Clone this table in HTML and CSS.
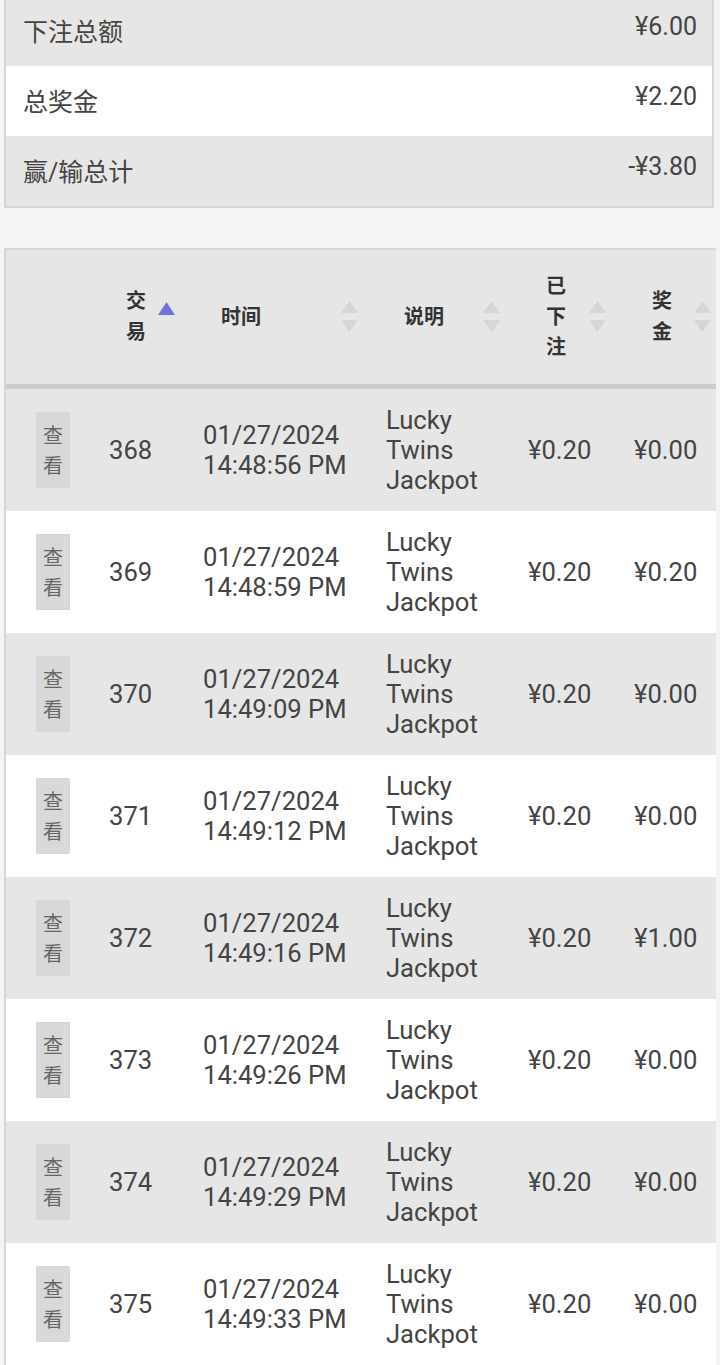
FILE: index.html
```html
<!DOCTYPE html>
<html lang="zh-CN">
<head>
<meta charset="utf-8">
<title>交易记录</title>
<link rel="stylesheet" href="styles.css">
</head>
<body>
<div class="summary">
  <div class="sum-row gray"><span class="sum-label">下注总额</span><span class="sum-value">¥6.00</span></div>
  <div class="sum-row white"><span class="sum-label">总奖金</span><span class="sum-value">¥2.20</span></div>
  <div class="sum-row gray"><span class="sum-label">赢/输总计</span><span class="sum-value">-¥3.80</span></div>
</div>

<div class="table-wrap">
  <table class="tx-table">
    <colgroup>
      <col class="c1"><col class="c2"><col class="c3"><col class="c4"><col class="c5"><col class="c6">
    </colgroup>
    <thead>
      <tr>
        <th class="th-blank"></th>
        <th class="sortable">交易<svg class="sort-icon" viewBox="0 0 17 31" width="17" height="31"><polygon class="up active" points="8.5,1 17,14 0,14"/></svg></th>
        <th class="sortable">时间<svg class="sort-icon" viewBox="0 0 17 31" width="17" height="31"><polygon class="up" points="8.5,0 17,12 0,12"/><polygon class="down" points="0,19 17,19 8.5,31"/></svg></th>
        <th class="sortable">说明<svg class="sort-icon" viewBox="0 0 17 31" width="17" height="31"><polygon class="up" points="8.5,0 17,12 0,12"/><polygon class="down" points="0,19 17,19 8.5,31"/></svg></th>
        <th class="sortable">已下注<svg class="sort-icon" viewBox="0 0 17 31" width="17" height="31"><polygon class="up" points="8.5,0 17,12 0,12"/><polygon class="down" points="0,19 17,19 8.5,31"/></svg></th>
        <th class="sortable last">奖金<svg class="sort-icon" viewBox="0 0 17 31" width="17" height="31"><polygon class="up" points="8.5,0 17,12 0,12"/><polygon class="down" points="0,19 17,19 8.5,31"/></svg></th>
      </tr>
    </thead>
    <tbody>
      <tr><td class="td-btn"><button class="view-btn">查看</button></td><td class="td-id">368</td><td>01/27/2024 14:48:56 PM</td><td>Lucky Twins Jackpot</td><td>¥0.20</td><td>¥0.00</td></tr>
      <tr><td class="td-btn"><button class="view-btn">查看</button></td><td class="td-id">369</td><td>01/27/2024 14:48:59 PM</td><td>Lucky Twins Jackpot</td><td>¥0.20</td><td>¥0.20</td></tr>
      <tr><td class="td-btn"><button class="view-btn">查看</button></td><td class="td-id">370</td><td>01/27/2024 14:49:09 PM</td><td>Lucky Twins Jackpot</td><td>¥0.20</td><td>¥0.00</td></tr>
      <tr><td class="td-btn"><button class="view-btn">查看</button></td><td class="td-id">371</td><td>01/27/2024 14:49:12 PM</td><td>Lucky Twins Jackpot</td><td>¥0.20</td><td>¥0.00</td></tr>
      <tr><td class="td-btn"><button class="view-btn">查看</button></td><td class="td-id">372</td><td>01/27/2024 14:49:16 PM</td><td>Lucky Twins Jackpot</td><td>¥0.20</td><td>¥1.00</td></tr>
      <tr><td class="td-btn"><button class="view-btn">查看</button></td><td class="td-id">373</td><td>01/27/2024 14:49:26 PM</td><td>Lucky Twins Jackpot</td><td>¥0.20</td><td>¥0.00</td></tr>
      <tr><td class="td-btn"><button class="view-btn">查看</button></td><td class="td-id">374</td><td>01/27/2024 14:49:29 PM</td><td>Lucky Twins Jackpot</td><td>¥0.20</td><td>¥0.00</td></tr>
      <tr><td class="td-btn"><button class="view-btn">查看</button></td><td class="td-id">375</td><td>01/27/2024 14:49:33 PM</td><td>Lucky Twins Jackpot</td><td>¥0.20</td><td>¥0.00</td></tr>
    </tbody>
  </table>
</div>
</body>
</html>
```

FILE: styles.css
```css
html, body {
  margin: 0;
  padding: 0;
}

body {
  background: #f4f4f4;
  font-family: "Roboto", "Noto Sans CJK SC", sans-serif;
  font-size: 25.6px;
  line-height: 30px;
  color: #444;
}

/* Summary box */
.summary {
  margin: -4px 6px 0 4px;
  border-left: 2px solid #d6d6d6;
  border-right: 2px solid #d6d6d6;
  border-bottom: 2px solid #d6d6d6;
}

.sum-row {
  display: flex;
  justify-content: space-between;
  align-items: flex-start;
  height: 70px;
  padding: 0 15px 0 17px;
  box-sizing: border-box;
}

.sum-row.gray { background: #e6e6e6; }
.sum-row.white { background: #ffffff; }

.sum-label {
  font-size: 25px;
  padding-top: 22px;
}

.sum-value {
  font-size: 25px;
  padding-top: 16px;
}

/* Table */
.table-wrap {
  margin: 40px 4px 0 4px;
  width: 712px;
  border-top: 2px solid #d6d6d6;
  border-left: 2px solid #d6d6d6;
  box-sizing: border-box;
}

.tx-table {
  width: 710px;
  table-layout: fixed;
  border-collapse: separate;
  border-spacing: 0;
}

.c1 { width: 82px; }
.c2 { width: 95px; }
.c3 { width: 183px; }
.c4 { width: 142px; }
.c5 { width: 106px; }
.c6 { width: 102px; }

.tx-table thead th {
  background: #e6e6e6;
  height: 130px;
  box-sizing: border-box;
  padding: 21px 30px 21px 38px;
  text-align: left;
  vertical-align: middle;
  font-size: 20px;
  line-height: 30.5px;
  font-weight: bold;
  color: #333;
  border-bottom: 5px solid #cbcbcb;
  position: relative;
}

.tx-table thead th.th-blank {
  padding: 0;
}

.sort-icon {
  position: absolute;
  right: 8px;
  top: 51px;
  display: block;
}

.tx-table thead th.last .sort-icon {
  right: 5px;
}

.sort-icon .up,
.sort-icon .down {
  fill: #d6d6d6;
}

.sort-icon .up.active {
  fill: #7272de;
}

.tx-table tbody td {
  height: 122px;
  box-sizing: border-box;
  padding: 16px 10px 16px 20px;
  vertical-align: middle;
  text-align: left;
}

.tx-table tbody tr:nth-child(odd) td { background: #e6e6e6; }
.tx-table tbody tr:nth-child(even) td { background: #ffffff; }

.tx-table tbody td.td-id {
  padding-left: 21px;
}

.tx-table tbody td.td-btn {
  padding: 0 0 0 30px;
}

.view-btn {
  display: block;
  width: 34px;
  box-sizing: border-box;
  padding: 8px 7px;
  margin: 0;
  border: none;
  border-radius: 0;
  background: #d8d8d8;
  color: #666;
  font-family: "Noto Sans CJK SC", sans-serif;
  font-size: 20px;
  line-height: 30px;
  text-align: center;
}
```
